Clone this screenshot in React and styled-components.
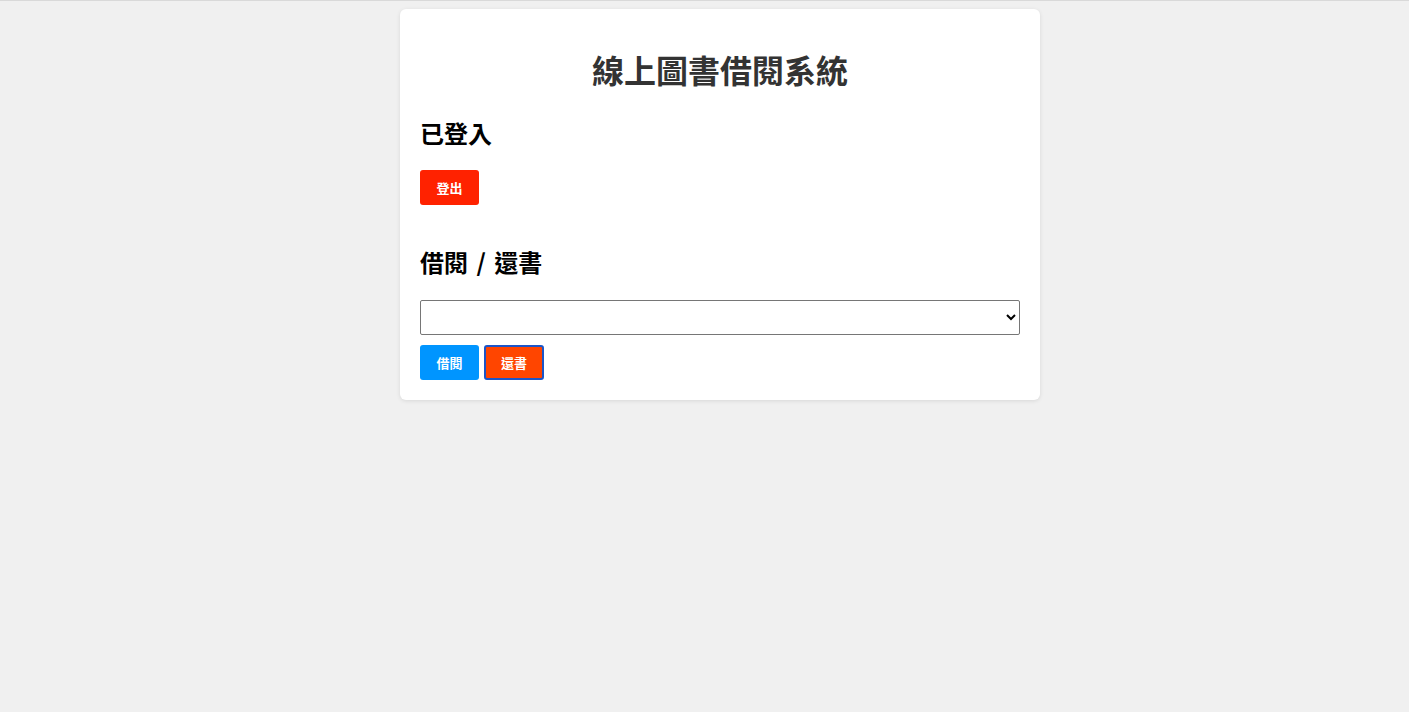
import React, { useState } from "react";
import styled, { createGlobalStyle } from "styled-components";

const books = [];

const GlobalStyle = createGlobalStyle`
  html, body {
    margin: 0;
    padding: 0;
    background: #f0f0f0;
  }
  body {
    border-top: 1px solid #d9d9d9;
    min-height: 711px;
    font-family: "Noto Sans CJK TC", "Noto Sans", "Liberation Sans", sans-serif;
  }
`;

const Page = styled.div`
  padding: 8px 0 0 31px;
`;

const Card = styled.div`
  width: 600px;
  margin: 0 auto;
  padding: 20px;
  background: #fff;
  border-radius: 6px;
  box-shadow: 0 1px 4px rgba(0, 0, 0, 0.1);
`;

const Title = styled.h1`
  margin: 17px 0 21px;
  font-size: 32px;
  line-height: 46px;
  font-weight: 700;
  text-align: center;
  color: #333;
`;

const Heading = styled.h2`
  margin: ${(p) => p.$top}px 0 ${(p) => p.$bottom}px;
  font-size: 24px;
  line-height: 35px;
  font-weight: 700;
  word-spacing: 3px;
  color: #000;
`;

const Row = styled.div`
  display: flex;
  gap: 5px;
`;

const Button = styled.button`
  width: ${(p) => (p.$focused ? 60 : 59)}px;
  height: 35px;
  padding: 0;
  font-family: inherit;
  font-size: 13px;
  font-weight: 700;
  line-height: 19px;
  color: #fff;
  background: ${(p) => p.$bg};
  border: ${(p) => (p.$focused ? "2px solid #1b55c8" : "none")};
  border-radius: 3px;
  cursor: pointer;
`;

const Select = styled.select`
  display: block;
  width: 100%;
  height: 35px;
  margin: 0 0 10px;
  padding: 0 4px;
  font-family: inherit;
  font-size: 14px;
  background: #fff;
  border: 1px solid #767676;
  border-radius: 2px;
  color: #000;
`;

export default function App() {
  const [book, setBook] = useState("");

  return (
    <Page>
      <GlobalStyle />
      <Card>
        <Title>線上圖書借閱系統</Title>
        <Heading $top={23} $bottom={20}>
          已登入
        </Heading>
        <Row>
          <Button $bg="#ff2200">登出</Button>
        </Row>
        <Heading $top={39} $bottom={21}>
          借閱 / 還書
        </Heading>
        <Select value={book} onChange={(e) => setBook(e.target.value)}>
          <option value=""></option>
          {books.map((b) => (
            <option key={b}>{b}</option>
          ))}
        </Select>
        <Row>
          <Button $bg="#0095ff">借閱</Button>
          <Button $bg="#ff4500" $focused>
            還書
          </Button>
        </Row>
      </Card>
    </Page>
  );
}
